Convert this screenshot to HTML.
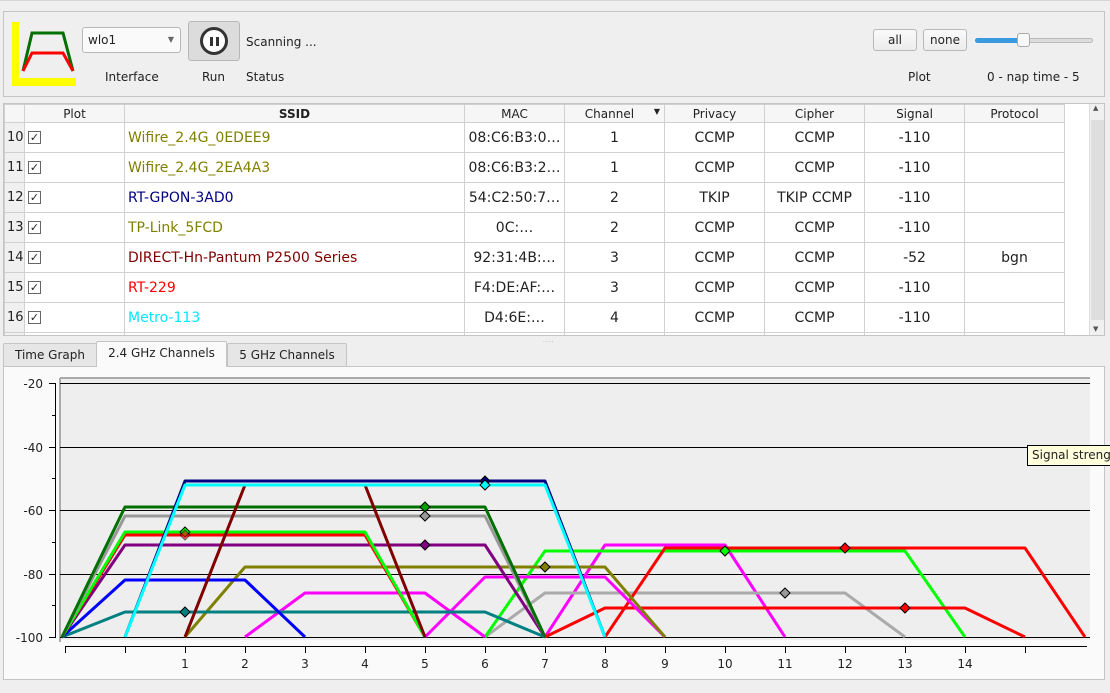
<!DOCTYPE html>
<html><head><meta charset="utf-8"><style>
*{box-sizing:border-box}
body{margin:0;width:1110px;height:693px;background:#efefef;font-family:"DejaVu Sans","Liberation Sans",sans-serif;font-size:12px;color:#222;position:relative;overflow:hidden}
.abs{position:absolute}
.panel{border:1px solid #c4c4c4}
.btn{position:absolute;border:1px solid #b8b8b8;border-radius:3px;background:linear-gradient(#fafafa,#ececec);text-align:center;font-size:12px;line-height:20px}
table{border-collapse:collapse;font-size:14px;table-layout:fixed}
td,th{border:1px solid #d0d0d0;height:30px;text-align:center;padding:0;white-space:nowrap;overflow:hidden}
th{height:18px;font-weight:normal;font-size:12px;background:#f6f6f6}
td.s{text-align:left;padding-left:3px}
td.n{background:#f0f0f0;font-size:13px;text-align:left;padding-left:2px;border-right:none}
.cb{display:inline-block;width:13px;height:13px;border:1px solid #666;background:#fff;font-size:11px;line-height:11px;text-align:center;vertical-align:middle}
.tab{position:absolute;top:343px;height:24px;border:1px solid #c4c4c4;border-bottom:none;background:#e6e6e6;font-size:12px;line-height:23px;text-align:center;border-radius:2px 2px 0 0}
</style></head><body>
<div class="abs" style="left:0;top:0;width:1110px;height:1px;background:#d6d6d6"></div>
<div class="abs panel" style="left:3px;top:11px;width:1102px;height:86px"></div>
<svg class="abs" style="left:10px;top:20px" width="70" height="68">
<rect x="2" y="2" width="7" height="64" fill="#ffff00"/><rect x="2" y="58" width="64" height="8" fill="#ffff00"/>
<polyline points="13,51 22,13 53,13 63,51" fill="none" stroke="#007000" stroke-width="3"/>
<polyline points="13,51 22,33 53,33 63,51" fill="none" stroke="#ff0000" stroke-width="3"/>
</svg>
<div class="btn" style="left:82px;top:27px;width:99px;height:26px;line-height:24px;text-align:left;padding-left:5px;background:#fafafa">wlo1<span style="position:absolute;right:6px;top:0;font-size:8px;color:#666">▼</span></div>
<div class="abs" style="left:105px;top:70px">Interface</div>
<div class="btn" style="left:188px;top:21px;width:52px;height:40px;background:#dcdcdc"></div>
<div class="abs" style="left:200px;top:27px;width:28px;height:28px;border-radius:50%;border:3px solid #333;background:#fff"><div class="abs" style="left:7px;top:7px;width:3px;height:9px;background:#333"></div><div class="abs" style="left:13px;top:7px;width:3px;height:9px;background:#333"></div></div>
<div class="abs" style="left:202px;top:70px">Run</div>
<div class="abs" style="left:246px;top:35px">Scanning ...</div>
<div class="abs" style="left:246px;top:70px">Status</div>
<div class="btn" style="left:873px;top:29px;width:44px;height:22px">all</div>
<div class="btn" style="left:923px;top:29px;width:44px;height:22px">none</div>
<div class="abs" style="left:975px;top:38px;width:118px;height:5px;border-radius:3px;background:#dcdcdc;border:1px solid #bbb"></div>
<div class="abs" style="left:975px;top:38px;width:48px;height:5px;border-radius:3px;background:#3a9ae0"></div>
<div class="abs" style="left:1017px;top:33px;width:13px;height:14px;border-radius:3px;background:#f8f8f8;border:1px solid #aaa"></div>
<div class="abs" style="left:908px;top:70px">Plot</div>
<div class="abs" style="left:987px;top:70px">0 - nap time - 5</div>

<div class="abs" style="left:3px;top:103px;width:1102px;height:233px;border:1px solid #c4c4c4;background:#fff;overflow:hidden">
<table style="width:1060px">
<colgroup><col style="width:20px"><col style="width:100px"><col style="width:340px"><col style="width:100px"><col style="width:100px"><col style="width:100px"><col style="width:100px"><col style="width:100px"><col style="width:100px"></colgroup>
<tr><th></th><th>Plot</th><th style="font-weight:bold">SSID</th><th>MAC</th><th>Channel <span style="font-size:8px;float:right;margin-right:4px">▼</span></th><th>Privacy</th><th>Cipher</th><th>Signal</th><th>Protocol</th></tr>
<tr><td class="n">10</td><td class="s"><span class="cb">✓</span></td><td class="s" style="color:#808000">Wifire_2.4G_0EDEE9</td><td>08:C6:B3:0…</td><td>1</td><td>CCMP</td><td>CCMP</td><td>-110</td><td></td></tr>
<tr><td class="n">11</td><td class="s"><span class="cb">✓</span></td><td class="s" style="color:#808000">Wifire_2.4G_2EA4A3</td><td>08:C6:B3:2…</td><td>1</td><td>CCMP</td><td>CCMP</td><td>-110</td><td></td></tr>
<tr><td class="n">12</td><td class="s"><span class="cb">✓</span></td><td class="s" style="color:#000080">RT-GPON-3AD0</td><td>54:C2:50:7…</td><td>2</td><td>TKIP</td><td>TKIP CCMP</td><td>-110</td><td></td></tr>
<tr><td class="n">13</td><td class="s"><span class="cb">✓</span></td><td class="s" style="color:#808000">TP-Link_5FCD</td><td>0C:…</td><td>2</td><td>CCMP</td><td>CCMP</td><td>-110</td><td></td></tr>
<tr><td class="n">14</td><td class="s"><span class="cb">✓</span></td><td class="s" style="color:#800000">DIRECT-Hn-Pantum P2500 Series</td><td>92:31:4B:…</td><td>3</td><td>CCMP</td><td>CCMP</td><td>-52</td><td>bgn</td></tr>
<tr><td class="n">15</td><td class="s"><span class="cb">✓</span></td><td class="s" style="color:#ff0000">RT-229</td><td>F4:DE:AF:…</td><td>3</td><td>CCMP</td><td>CCMP</td><td>-110</td><td></td></tr>
<tr><td class="n">16</td><td class="s"><span class="cb">✓</span></td><td class="s" style="color:#00e8ff">Metro-113</td><td>D4:6E:…</td><td>4</td><td>CCMP</td><td>CCMP</td><td>-110</td><td></td></tr>
<tr><td class="n">17</td><td></td><td></td><td></td><td></td><td></td><td></td><td></td><td></td></tr>
</table>
<div class="abs" style="left:1085px;top:0;width:16px;height:231px;background:#f0f0f0;border-left:1px solid #ddd"><div class="abs" style="left:1px;top:16px;width:13px;height:200px;background:#dedede"></div><div class="abs" style="left:3px;top:0;font-size:7px;color:#555">▲</div><div class="abs" style="left:3px;bottom:2px;font-size:7px;color:#555">▼</div></div>
</div>
<div class="abs" style="left:543px;top:337px;font-size:6px;color:#999;letter-spacing:1px">....</div>

<div class="tab" style="left:3px;width:94px">Time Graph</div>
<div class="tab" style="left:96px;top:341px;height:26px;width:131px;background:#fafafa;z-index:2">2.4 GHz Channels</div>
<div class="tab" style="left:227px;width:120px">5 GHz Channels</div>
<div class="abs panel" style="left:3px;top:366px;width:1102px;height:314px;background:#fafafa"></div>

<svg class="abs" style="left:0;top:366px" width="1105" height="314" viewBox="0 366 1105 314" font-family="DejaVu Sans, sans-serif" font-size="12">
<rect x="60" y="378" width="1030" height="262" fill="#eeeeee"/>
<line x1="60" y1="378" x2="1090" y2="378" stroke="#aaa" stroke-width="2"/>
<line x1="60" y1="378" x2="60" y2="642" stroke="#aaa" stroke-width="2"/>
<g stroke="#000" stroke-width="1">
<line x1="60" y1="383.5" x2="1090" y2="383.5"/><line x1="60" y1="447.5" x2="1090" y2="447.5"/><line x1="60" y1="510.5" x2="1090" y2="510.5"/><line x1="60" y1="574.5" x2="1090" y2="574.5"/><line x1="60" y1="637.5" x2="1090" y2="637.5"/>
<line x1="55.5" y1="383" x2="55.5" y2="638"/>
<line x1="49" y1="383.5" x2="56" y2="383.5"/><line x1="52" y1="415.5" x2="56" y2="415.5"/><line x1="49" y1="447.5" x2="56" y2="447.5"/><line x1="52" y1="478.5" x2="56" y2="478.5"/><line x1="49" y1="510.5" x2="56" y2="510.5"/><line x1="52" y1="542.5" x2="56" y2="542.5"/><line x1="49" y1="574.5" x2="56" y2="574.5"/><line x1="52" y1="605.5" x2="56" y2="605.5"/><line x1="49" y1="637.5" x2="56" y2="637.5"/>
<line x1="65" y1="646.5" x2="1087" y2="646.5"/>
<path d="M65.5 646v7M125.5 646v7M185.5 646v7M245.5 646v7M305.5 646v7M365.5 646v7M425.5 646v7M485.5 646v7M545.5 646v7M605.5 646v7M665.5 646v7M725.5 646v7M785.5 646v7M845.5 646v7M905.5 646v7M965.5 646v7M1025.5 646v7"/>
</g>
<g text-anchor="end" fill="#222"><text x="43" y="388">-20</text><text x="43" y="452">-40</text><text x="43" y="515">-60</text><text x="43" y="579">-80</text><text x="43" y="642">-100</text></g>
<g text-anchor="middle" fill="#222"><text x="185" y="668">1</text><text x="245" y="668">2</text><text x="305" y="668">3</text><text x="365" y="668">4</text><text x="425" y="668">5</text><text x="485" y="668">6</text><text x="545" y="668">7</text><text x="605" y="668">8</text><text x="665" y="668">9</text><text x="725" y="668">10</text><text x="785" y="668">11</text><text x="845" y="668">12</text><text x="905" y="668">13</text><text x="965" y="668">14</text></g>
<g fill="none" stroke-width="3" stroke-linejoin="round">
<polyline stroke="#ff00ff" points="545,637 605,545 725,545 785,637"/>
<polyline stroke="#aaaaaa" points="485,637 545,593 845,593 905,637"/>
<polyline stroke="#00ff00" points="485,637 545,551 905,551 965,637"/>
<polyline stroke="#ff0000" points="545,637 605,608 965,608 1025,637"/>
<polyline stroke="#ff0000" points="605,637 665,548 1025,548 1085,637"/>
<polyline stroke="#ff00ff" points="425,637 485,577 605,577 665,637"/>
<polyline stroke="#ff00ff" points="245,637 305,593 425,593 485,637"/>
<polyline stroke="#808000" points="185,637 245,567 605,567 665,637"/>
<polyline stroke="#008080" points="62,637 125,612 485,612 545,637"/>
<polyline stroke="#0000ff" points="62,637 125,580 245,580 305,637"/>
<polyline stroke="#800080" points="62,637 125,545 485,545 545,637"/>
<polyline stroke="#ff0000" points="62,637 125,535 365,535 425,637"/>
<polyline stroke="#00ff00" points="62,637 125,532 365,532 425,637"/>
<polyline stroke="#999999" points="62,637 125,516 485,516 545,637"/>
<polyline stroke="#007000" points="62,637 125,507 485,507 545,637"/>
<polyline stroke="#800000" points="185,637 245,485 365,485 425,637"/>
<polyline stroke="#000080" points="125,637 185,481 545,481 605,637"/>
<polyline stroke="#00ffff" points="125,637 185,485 545,485 605,637"/>
</g>
<g stroke="#000" stroke-width="1">
<path d="M485 476l5 5-5 5-5-5z" fill="#000080"/>
<path d="M485 480l5 5-5 5-5-5z" fill="#00ffff"/>
<path d="M425 502l5 5-5 5-5-5z" fill="#00a000"/>
<path d="M425 511l5 5-5 5-5-5z" fill="#999"/>
<path d="M185 527l5 5-5 5-5-5z" fill="#00ff00"/>
<path d="M185 530l5 5-5 5-5-5z" fill="#ff0000" opacity=".6"/>
<path d="M425 540l5 5-5 5-5-5z" fill="#800080"/>
<path d="M545 562l5 5-5 5-5-5z" fill="#808000"/>
<path d="M185 607l5 5-5 5-5-5z" fill="#008080"/>
<path d="M725 546l5 5-5 5-5-5z" fill="#00ff00"/>
<path d="M845 543l5 5-5 5-5-5z" fill="#ff0000"/>
<path d="M785 588l5 5-5 5-5-5z" fill="#999"/>
<path d="M905 603l5 5-5 5-5-5z" fill="#ff0000"/>
</g>
</svg>
<div class="abs" style="left:1027px;top:445px;width:90px;height:21px;background:#ffffdc;border:1px solid #000;font-size:12px;line-height:19px;padding-left:4px;white-space:nowrap;overflow:hidden">Signal strength</div>
</body></html>
